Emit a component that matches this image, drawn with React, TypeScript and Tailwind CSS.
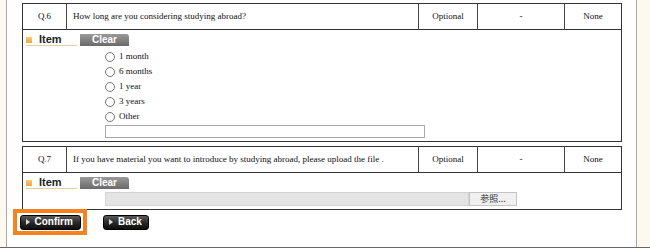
import React from 'react';

const serif = { fontFamily: '"Liberation Serif", "Times New Roman", serif' };
const sans = { fontFamily: '"Liberation Sans", Arial, sans-serif' };

interface Question {
  no: string;
  text: string;
}

const HeaderRow: React.FC<Question> = ({ no, text }) => (
  <div className="flex h-[26px] border-b border-[#333] text-[9px] text-[#111]" style={serif}>
    <div className="w-[43px] flex items-center justify-center">{no}</div>
    <div className="w-[352px] border-l border-[#444] flex items-center pl-[6px]">{text}</div>
    <div className="w-[59px] border-l border-[#444] flex items-center justify-center">Optional</div>
    <div className="w-[87px] border-l border-[#444] flex items-center justify-center">-</div>
    <div className="flex-1 border-l border-[#444] flex items-center justify-center">None</div>
  </div>
);

const ItemBar: React.FC = () => (
  <div className="flex items-start h-[12px]">
    <div className="w-[51px] h-[12px] flex items-center border-b border-[#e5cf9c]">
      <span className="w-[6px] h-[6px] bg-gradient-to-b from-[#f9c977] to-[#f0a640]" />
      <span className="ml-[7px] text-[11px] font-bold leading-none text-[#222]" style={sans}>
        Item
      </span>
    </div>
    <button
      className="ml-[3px] w-[49px] h-[12px] rounded-tr-[3px] bg-gradient-to-b from-[#9a9a9a] to-[#6a6a6a] text-white text-[10px] font-bold leading-none flex items-center justify-center"
      style={sans}
    >
      Clear
    </button>
  </div>
);

const options = ['1 month', '6 months', '1 year', '3 years', 'Other'];

const Radio: React.FC<{ label: string }> = ({ label }) => (
  <div className="flex items-center h-[15px]">
    <span className="w-[10px] h-[10px] rounded-full border border-[#777] bg-white" />
    <span className="ml-[4px] text-[9px] text-[#111]" style={serif}>
      {label}
    </span>
  </div>
);

const NavButton: React.FC<{ label: string; width: string }> = ({ label, width }) => (
  <button
    className={`${width} h-[15px] rounded-[3px] border border-black bg-gradient-to-b from-[#5a5a5a] via-[#2a2a2a] to-[#0e0e0e] flex items-center pl-[5px] text-white text-[10px] font-bold leading-none`}
    style={sans}
  >
    <svg width="4" height="6" viewBox="0 0 4 6" className="mr-[5px]">
      <path d="M0 0 L4 3 L0 6 Z" fill="#ddd" />
    </svg>
    {label}
  </button>
);

export default function App() {
  return (
    <div className="w-[650px] h-[250px] bg-white">
      <div className="flex w-[650px] h-[248px] bg-[#fdf9ee] border-b border-[#666]">
        <div className="w-[6px]" />
        <div className="w-[631px] h-full bg-white border-l border-r border-[#a8a8a8] pt-[3px] pl-[15px]">
          {/* Q.6 */}
          <div className="w-[600px] border border-[#333]">
            <HeaderRow no="Q.6" text="How long are you considering studying abroad?" />
            <div className="pl-[3px] pt-[4px] pb-[3px]">
              <ItemBar />
              <div className="ml-[79px] mt-[3px]">
                {options.map(o => (
                  <Radio key={o} label={o} />
                ))}
                <div className="mt-[1px] w-[320px] h-[13px] border border-[#aaa] bg-white" />
              </div>
            </div>
          </div>

          {/* Q.7 */}
          <div className="w-[600px] border border-[#333] mt-[4px]">
            <HeaderRow
              no="Q.7"
              text="If you have material you want to introduce by studying abroad, please upload the file ."
            />
            <div className="pl-[3px] pt-[4px] pb-[3px]">
              <ItemBar />
              <div className="ml-[79px] mt-[3px] flex h-[14px]">
                <div className="w-[364px] h-full bg-[#e4e4e4] border border-[#d4d4d4]" />
                <div
                  className="w-[48px] h-full bg-[#f0f0f0] border border-[#c4c4c4] flex items-center justify-center text-[9px] text-[#333]"
                  style={{ fontFamily: '"Noto Sans CJK JP", "Liberation Sans", sans-serif' }}
                >
                  参照...
                </div>
              </div>
            </div>
          </div>

          <div className="flex items-center -ml-[9px] -mt-[1px]">
            <div className="w-[74px] h-[26px] border-4 border-[#f5821f] flex items-center justify-center">
              <NavButton label="Confirm" width="w-[61px]" />
            </div>
            <div className="ml-[16px]">
              <NavButton label="Back" width="w-[46px]" />
            </div>
          </div>
        </div>
        <div className="flex-1" />
      </div>
    </div>
  );
}
